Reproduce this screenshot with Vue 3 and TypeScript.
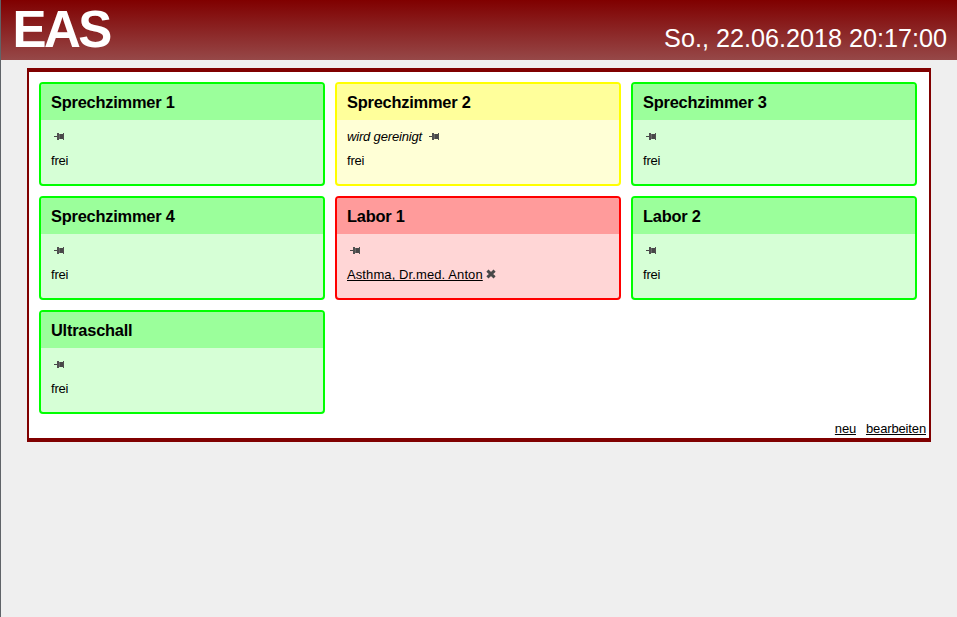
<script setup lang="ts">
type Status = 'free' | 'cleaning' | 'busy'

interface Room {
  name: string
  status: Status
  note?: string
  patient?: string
}

const rooms: Room[] = [
  { name: 'Sprechzimmer 1', status: 'free' },
  { name: 'Sprechzimmer 2', status: 'cleaning', note: 'wird gereinigt' },
  { name: 'Sprechzimmer 3', status: 'free' },
  { name: 'Sprechzimmer 4', status: 'free' },
  { name: 'Labor 1', status: 'busy', patient: 'Asthma, Dr.med. Anton' },
  { name: 'Labor 2', status: 'free' },
  { name: 'Ultraschall', status: 'free' },
]
</script>

<template>
  <div class="page">
    <header class="header">
      <h1 class="brand">EAS</h1>
      <time class="clock">So., 22.06.2018 20:17:00</time>
    </header>
    <main class="panel">
      <div class="rooms">
        <section v-for="room in rooms" :key="room.name" class="room" :class="room.status">
          <h2 class="title">{{ room.name }}</h2>
          <div class="body">
            <div class="row">
              <span v-if="room.note" class="note">{{ room.note }}</span>
              <svg class="pin" :class="{ spaced: room.note }" width="10" height="8" viewBox="0 0 10 8">
                <rect x="0" y="4" width="3" height="1" fill="#484848" />
                <rect x="3" y="1" width="2" height="7" fill="#505050" />
                <rect x="5" y="2" width="1" height="5" fill="#686868" />
                <rect x="6" y="2" width="3" height="5" fill="#484848" />
                <rect x="9" y="1" width="1" height="7" fill="#505050" />
              </svg>
            </div>
            <div class="row">
              <template v-if="room.patient">
                <a class="link patient">{{ room.patient }}</a>
                <svg class="cross" width="10" height="10" viewBox="0 0 10 10">
                  <path d="M1.4 1.6 8.6 8.4M8.6 1.6 1.4 8.4" stroke="#484848" stroke-width="3" />
                </svg>
              </template>
              <span v-else class="vacant">frei</span>
            </div>
          </div>
        </section>
      </div>
      <footer class="actions">
        <a class="link new">neu</a>
        <a class="link edit">bearbeiten</a>
      </footer>
    </main>
  </div>
</template>

<style>
body {
  background: #efefef;
}
</style>

<style scoped>
.page {
  box-sizing: border-box;
  height: 617px;
  border-left: 1px solid #5f6368;
  background: #efefef;
  color: #000;
  font-family: "Liberation Sans", Arial, sans-serif;
  font-size: 13px;
}
.header {
  box-sizing: border-box;
  display: flex;
  justify-content: space-between;
  height: 60px;
  padding: 0 10px 0 11.5px;
  background: linear-gradient(#800000, #964848);
  color: #fff;
}
.brand {
  margin: 0;
  padding-top: 1px;
  font-size: 51px;
  line-height: 58px;
  letter-spacing: -2.6px;
}
.clock {
  padding-top: 23px;
  font-size: 25.2px;
  line-height: 31px;
}
.panel {
  box-sizing: border-box;
  width: 904px;
  height: 374px;
  margin: 8px 0 0 26px;
  padding: 10px 3px 0 10px;
  border: solid #800000;
  border-width: 4px 2px;
  background: #fff;
}
.rooms {
  display: grid;
  grid-template-columns: repeat(3, 286px);
  grid-auto-rows: 104px;
  gap: 10px;
}
.room {
  box-sizing: border-box;
  overflow: hidden;
  border: 2px solid;
  border-radius: 4px;
}
.free {
  border-color: #00ff00;
  background: #d6ffd6;
}
.cleaning {
  border-color: #ffff00;
  background: #ffffd6;
}
.busy {
  border-color: #ff0000;
  background: #ffd6d6;
}
.title {
  margin: 0;
  padding: 0 10px;
  font-size: 16.4px;
  line-height: 36px;
  letter-spacing: -0.22px;
}
.free .title {
  background: #9bff9b;
}
.cleaning .title {
  background: #ffff9b;
}
.busy .title {
  background: #ff9b9b;
}
.body {
  padding: 4px 10px;
}
.row {
  display: flex;
  align-items: center;
  height: 24px;
  line-height: 16px;
}
.note,
.patient,
.vacant {
  padding-top: 2px;
}
.note {
  font-style: italic;
  letter-spacing: -0.17px;
}
.vacant {
  letter-spacing: -0.2px;
}
.pin {
  margin-left: 3px;
}
.pin.spaced {
  margin-left: 7px;
}
.cross {
  margin-left: 3px;
}
.link {
  text-decoration: underline;
  text-underline-offset: 1px;
  text-decoration-thickness: 1px;
  text-decoration-skip-ink: none;
}
.patient {
  letter-spacing: 0.1px;
}
.actions {
  display: flex;
  justify-content: flex-end;
  gap: 10px;
  padding-top: 7px;
  line-height: 16px;
}
.new {
  letter-spacing: -0.2px;
}
.edit {
  letter-spacing: -0.14px;
}
</style>
